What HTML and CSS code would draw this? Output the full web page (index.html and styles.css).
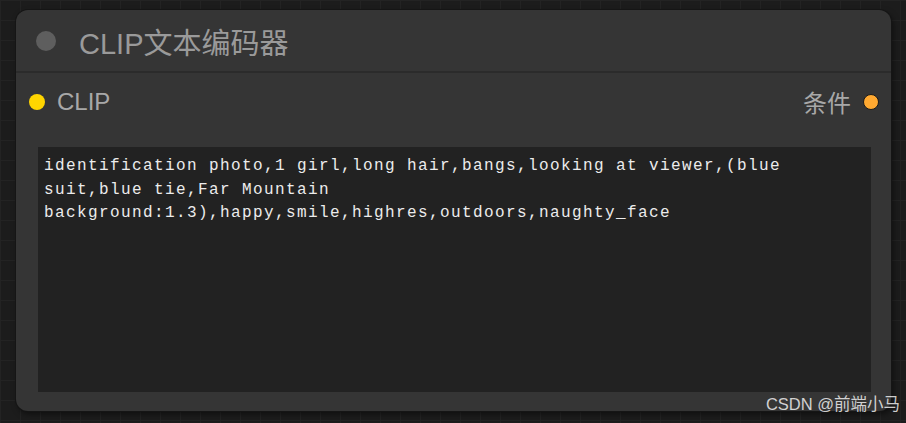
FILE: index.html
```html
<!doctype html>
<html lang="zh-CN">
<head>
	<meta charset="UTF-8">
	<title>CLIP文本编码器</title>
	<link rel="stylesheet" href="styles.css">
</head>
<body>
	<div class="canvas">
		<div class="node">
			<div class="node-title">
				<span class="title-dot"></span>
				<span class="title-text">CLIP文本编码器</span>
			</div>
			<div class="slots">
				<div class="slot">
					<span class="slot-dot slot-in"></span>
					<span class="slot-name">CLIP</span>
				</div>
				<div class="slot">
					<span class="slot-name">条件</span>
					<span class="slot-dot slot-out"></span>
				</div>
			</div>
			<div class="prompt">identification photo,1 girl,long hair,bangs,looking at viewer,(blue suit,blue tie,Far Mountain background:1.3),happy,smile,highres,outdoors,naughty_face</div>
		</div>
		<div class="watermark">CSDN @前端小马</div>
	</div>
</body>
</html>
```

FILE: styles.css
```css
html,body{
	margin:0;
	padding:0;
}
body{
	width:906px;
	height:423px;
	overflow:hidden;
	background-color:#1c1c1c;
	background-image:
		linear-gradient(#232323 1px, transparent 1px),
		linear-gradient(90deg, #232323 1px, transparent 1px);
	background-size:20px 20px;
	font-family:"Liberation Sans","Noto Sans CJK SC",sans-serif;
}
.canvas{
	position:relative;
	width:906px;
	height:423px;
	padding-top:10px;
	box-sizing:border-box;
}
.node{
	margin-left:16px;
	width:875px;
	height:401px;
	background:#353535;
	border-radius:12px;
	box-shadow:0 0 0 1px #151515, 2px 3px 6px rgba(0,0,0,0.5);
	display:flex;
	flex-direction:column;
}
.node-title{
	height:61px;
	display:flex;
	align-items:center;
	padding-left:20px;
	gap:23px;
	border-bottom:2px solid #2b2b2b;
}
.title-dot{
	width:20px;
	height:20px;
	border-radius:50%;
	background:#5e5e5e;
}
.title-text{
	font-size:29px;
	color:#9a9a9a;
}
.slots{
	display:flex;
	justify-content:space-between;
	align-items:center;
	height:57px;
	padding:0 12px 0 13px;
}
.slot{
	display:flex;
	align-items:center;
	gap:12px;
}
.slot-name{
	font-size:24px;
	color:#a8a8a8;
}
.slot-dot{
	width:16px;
	height:16px;
	border-radius:50%;
	box-sizing:border-box;
}
.slot-in{
	background:#ffd500;
}
.slot-out{
	background:#ffa931;
	border:1.5px solid #1a1a1a;
}
.prompt{
	margin:17px 20px 19px 22px;
	flex:1;
	background:#222;
	padding:8px 6px 6px;
	font-family:"Liberation Mono",monospace;
	font-size:16px;
	letter-spacing:1.4px;
	line-height:23.5px;
	color:#ececec;
	white-space:pre-wrap;
}
.watermark{
	position:absolute;
	right:6px;
	bottom:8px;
	font-size:16.5px;
	color:rgba(255,255,255,0.78);
}
```
